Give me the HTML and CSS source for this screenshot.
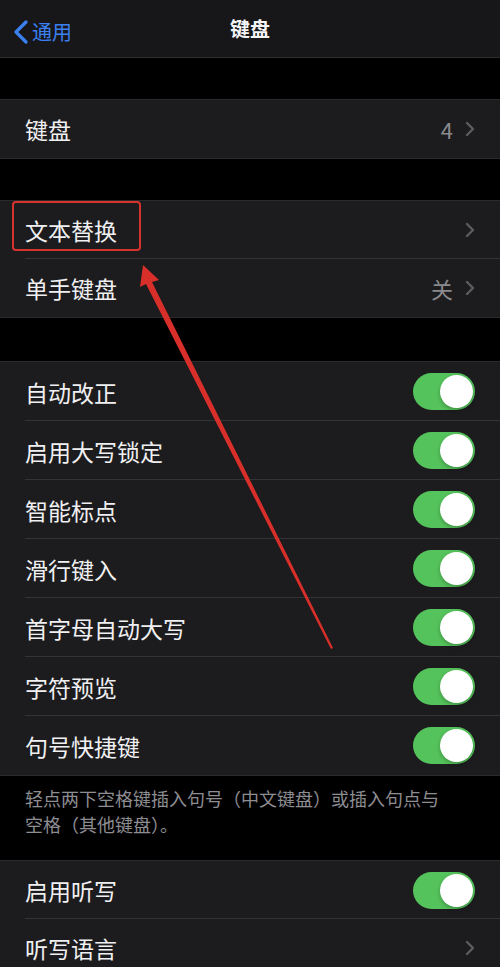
FILE: index.html
```html
<!DOCTYPE html>
<html lang="zh-CN">
<head>
  <meta charset="UTF-8">
  <title>键盘</title>
  <link rel="stylesheet" href="styles.css">
</head>
<body>

  <header class="navbar">
    <a class="back" href="#">
      <svg class="back-icon" width="16" height="24" viewBox="0 0 16 24">
        <path d="M13 2 L3 12 L13 22" fill="none" stroke="currentColor" stroke-width="3.2" stroke-linecap="round" stroke-linejoin="round"/>
      </svg>
      <span>通用</span>
    </a>
    <h1 class="title">键盘</h1>
  </header>

  <section class="group">
    <div class="row">
      <span class="label">键盘</span>
      <span class="value">4</span>
      <svg class="chevron" width="10" height="16" viewBox="0 0 10 16"><path d="M2 2 L8 8 L2 14"/></svg>
    </div>
  </section>

  <section class="group">
    <div class="row">
      <span class="label">文本替换</span>
      <svg class="chevron" width="10" height="16" viewBox="0 0 10 16"><path d="M2 2 L8 8 L2 14"/></svg>
    </div>
    <div class="row">
      <span class="label">单手键盘</span>
      <span class="value">关</span>
      <svg class="chevron" width="10" height="16" viewBox="0 0 10 16"><path d="M2 2 L8 8 L2 14"/></svg>
    </div>
  </section>

  <section class="group group-toggles">
    <div class="row"><span class="label">自动改正</span><span class="switch on"></span></div>
    <div class="row"><span class="label">启用大写锁定</span><span class="switch on"></span></div>
    <div class="row"><span class="label">智能标点</span><span class="switch on"></span></div>
    <div class="row"><span class="label">滑行键入</span><span class="switch on"></span></div>
    <div class="row"><span class="label">首字母自动大写</span><span class="switch on"></span></div>
    <div class="row"><span class="label">字符预览</span><span class="switch on"></span></div>
    <div class="row"><span class="label">句号快捷键</span><span class="switch on"></span></div>
  </section>

  <p class="footnote">轻点两下空格键插入句号（中文键盘）或插入句点与空格（其他键盘）。</p>

  <section class="group group-last">
    <div class="row"><span class="label">启用听写</span><span class="switch on"></span></div>
    <div class="row">
      <span class="label">听写语言</span>
      <svg class="chevron" width="10" height="16" viewBox="0 0 10 16"><path d="M2 2 L8 8 L2 14"/></svg>
    </div>
  </section>

  <!-- 标注：红框 + 箭头 -->
  <div class="mark-box"></div>
  <svg class="mark-arrow" width="500" height="967" viewBox="0 0 500 967">
    <polygon points="143,265 159,280 152,282 333,648 331,649 146,284 140,287" fill="#d92f2a"/>
  </svg>

</body>
</html>
```

FILE: styles.css
```css
* {
  box-sizing: border-box;
}

body {
  margin: 0;
  width: 500px;
  height: 967px;
  overflow: hidden;
  position: relative;
  background: #000;
  color: #f2f2f4;
  font-family: "Noto Sans CJK SC", "Noto Sans", sans-serif;
}

.navbar {
  height: 58px;
  background: #171719;
  border-bottom: 1px solid #2e2e31;
  display: flex;
  align-items: center;
  justify-content: center;
  position: relative;
}

.back {
  position: absolute;
  left: 13px;
  top: 17px;
  display: flex;
  align-items: center;
  gap: 3px;
  color: #3b7ff0;
  text-decoration: none;
  font-size: 20px;
}

.title {
  margin: 0;
  font-size: 20px;
  font-weight: 600;
  color: #f4f4f6;
}

.group {
  margin-top: 41px;
  background: #1c1c1e;
  border-top: 1px solid #2a2a2d;
  border-bottom: 1px solid #2a2a2d;
}

.row {
  height: 58px;
  padding: 0 25px;
  display: flex;
  align-items: center;
  position: relative;
}

.group-toggles {
  margin-top: 43px;
}

.group-toggles .row {
  height: 59px;
}

.row + .row::before {
  content: "";
  position: absolute;
  top: -1px;
  left: 25px;
  right: 0;
  height: 1px;
  background: #333336;
}

.label {
  flex: 1;
  font-size: 23px;
  color: #f0f0f2;
}

.value {
  font-size: 22px;
  color: #8a8a8e;
  margin-right: 12px;
}

.chevron {
  fill: none;
  stroke: #5c5c60;
  stroke-width: 2.4;
  stroke-linecap: round;
  stroke-linejoin: round;
}

.switch {
  width: 62px;
  height: 37px;
  border-radius: 19px;
  background: #3a3a3c;
  position: relative;
}

.switch.on {
  background: #55c35b;
}

.switch::after {
  content: "";
  position: absolute;
  top: 2px;
  left: 2px;
  width: 33px;
  height: 33px;
  border-radius: 50%;
  background: #fff;
  box-shadow: 0 2px 4px rgba(0, 0, 0, 0.25);
}

.switch.on::after {
  left: 27px;
}

.footnote {
  margin: 0;
  padding: 9px 50px 0 25px;
  height: 84px;
  font-size: 18px;
  line-height: 26px;
  color: #8d8d92;
}

.group-last {
  margin-top: 0;
}

.mark-box {
  position: absolute;
  left: 12px;
  top: 201px;
  width: 129px;
  height: 50px;
  border: 2px solid #d7332e;
  border-radius: 4px;
}

.mark-arrow {
  position: absolute;
  left: 0;
  top: 0;
}
```
